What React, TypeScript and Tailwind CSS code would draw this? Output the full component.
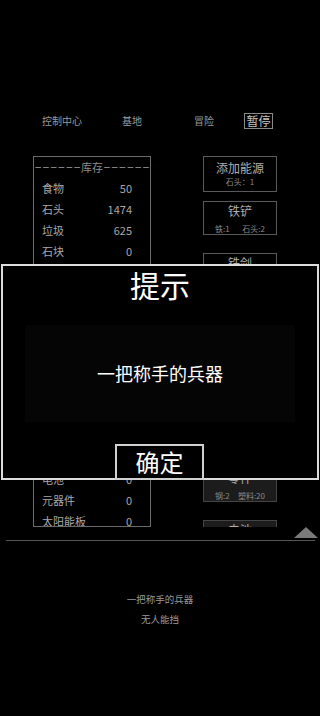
const font = { fontFamily: '"Noto Sans CJK SC", "Noto Sans", sans-serif' };
const mono = { fontFamily: '"Liberation Mono", monospace' };

const stock: [string, number][] = [
  ["食物", 50],
  ["石头", 1474],
  ["垃圾", 625],
  ["石块", 0],
  ["铁", 0],
  ["铜", 0],
  ["钢", 0],
  ["木材", 0],
  ["塑料", 0],
  ["玻璃", 0],
  ["布料", 0],
  ["电线", 0],
  ["齿轮", 0],
  ["芯片", 0],
  ["电池", 0],
  ["元器件", 0],
  ["太阳能板", 0],
];

const CostButton = ({
  title,
  costs,
  className,
}: {
  title: string;
  costs: string[];
  className: string;
}) => (
  <div className={`w-[74px] shrink-0 border border-[#5a5a5a] flex flex-col ${className}`}>
    <div className="pt-[2px] text-center text-[12px] leading-[14px] text-[#b0b0b0]">{title}</div>
    <div className="mt-[5.5px] flex justify-between px-[11px] text-[8px] leading-[10px] text-[#8a8a8a]">
      {costs.map((c) => (
        <span key={c}>{c}</span>
      ))}
    </div>
  </div>
);

export default function App() {
  return (
    <div className="relative w-[320px] h-[716px] bg-black overflow-hidden" style={font}>
      {/* top nav */}
      <div className="pt-[113px] flex items-center h-[129px] text-[10px] text-[#9a9a9a]">
        <span className="ml-[42px] leading-[16px]">控制中心</span>
        <span className="ml-[40px] leading-[16px]">基地</span>
        <span className="ml-[52px] leading-[16px]">冒险</span>
        <span className="ml-[30px] h-[16px] w-[29px] border border-[#8a8a8a] text-[12px] leading-[14px] text-center text-[#c4c4c4]">
          暂停
        </span>
      </div>

      {/* main area */}
      <div className="mt-[27px] h-[371px] overflow-hidden flex items-start">
        <div className="ml-[33px] w-[118px] h-[371px] border border-[#6a6a6a] overflow-hidden">
          <div className="h-[21px] flex items-center justify-center text-[#8c8c8c]">
            <span className="text-[13px] leading-[21px]" style={mono}>
              ––––––
            </span>
            <span className="text-[11px] leading-[21px]">库存</span>
            <span className="text-[13px] leading-[21px]" style={mono}>
              ––––––
            </span>
          </div>
          {stock.map(([name, n]) => (
            <div
              key={name}
              className="h-[20.8px] flex items-center justify-between pl-[8px] pr-[18px] text-[11px] text-[#a8a8a8]"
            >
              <span>{name}</span>
              <span>{n}</span>
            </div>
          ))}
        </div>

        <div className="ml-[52px] flex flex-col">
          <div className="w-[74px] h-[36px] border border-[#5a5a5a] flex flex-col items-center">
            <div className="pt-[4px] text-[12px] leading-[14px] text-[#b0b0b0]">添加能源</div>
            <div className="mt-[2px] text-[8px] leading-[10px] text-[#8a8a8a]">石头：1</div>
          </div>
          <CostButton title="铁铲" costs={["铁:1", "石头:2"]} className="mt-[9px] h-[34px]" />
          <CostButton title="铁剑" costs={["铁:3", "木材:1"]} className="mt-[18px] h-[36px]" />
          <CostButton title="铁镐" costs={["铁:2", "木材:1"]} className="mt-[18px] h-[36px]" />
          <CostButton title="铁锤" costs={["铁:2", "石头:1"]} className="mt-[18px] h-[36px]" />
          <CostButton title="电线" costs={["铜:2", "塑料:1"]} className="mt-[18px] h-[35px]" />
          <CostButton
            title="零件"
            costs={["钢:2", "塑料:20"]}
            className="mt-[18px] h-[34px] bg-[#1c1c1c] border-[#444]"
          />
          <CostButton
            title="电池"
            costs={["铜:5", "塑料:10"]}
            className="mt-[18px] h-[34px] bg-[#1c1c1c] border-[#444]"
          />
        </div>
      </div>

      {/* divider with toggle */}
      <div className="flex justify-end pr-[2px]">
        <svg width="24" height="11" viewBox="0 0 24 11">
          <polygon points="12,0 24,11 0,11" fill="#7a7a7a" />
        </svg>
      </div>
      <div className="ml-[6px] mr-[5px] h-px mt-[1.5px] bg-[#555]" />

      {/* log */}
      <div className="mt-[51px] text-center text-[9.5px] leading-[14px] text-[#9a9a9a]">一把称手的兵器</div>
      <div className="mt-[6px] text-center text-[9.5px] leading-[14px] text-[#9a9a9a]">无人能挡</div>

      {/* dialog */}
      <div className="absolute left-[1px] top-[264px] w-[318px] h-[215.5px] border-2 border-[#dcdcdc] bg-black flex flex-col">
        <div className="text-center text-[30px] leading-[36px] text-white">提示</div>
        <div className="mt-[23px] mx-[22px] h-[97px] bg-[#050505] flex items-center justify-center text-[18px] text-white">
          一把称手的兵器
        </div>
        <div className="mt-auto -mb-[2px] ml-[112px] w-[89px] h-[35.5px] border-2 border-[#d0d0d0] bg-black flex items-center justify-center text-[24px] leading-[30px] text-white">
          确定
        </div>
      </div>
    </div>
  );
}
